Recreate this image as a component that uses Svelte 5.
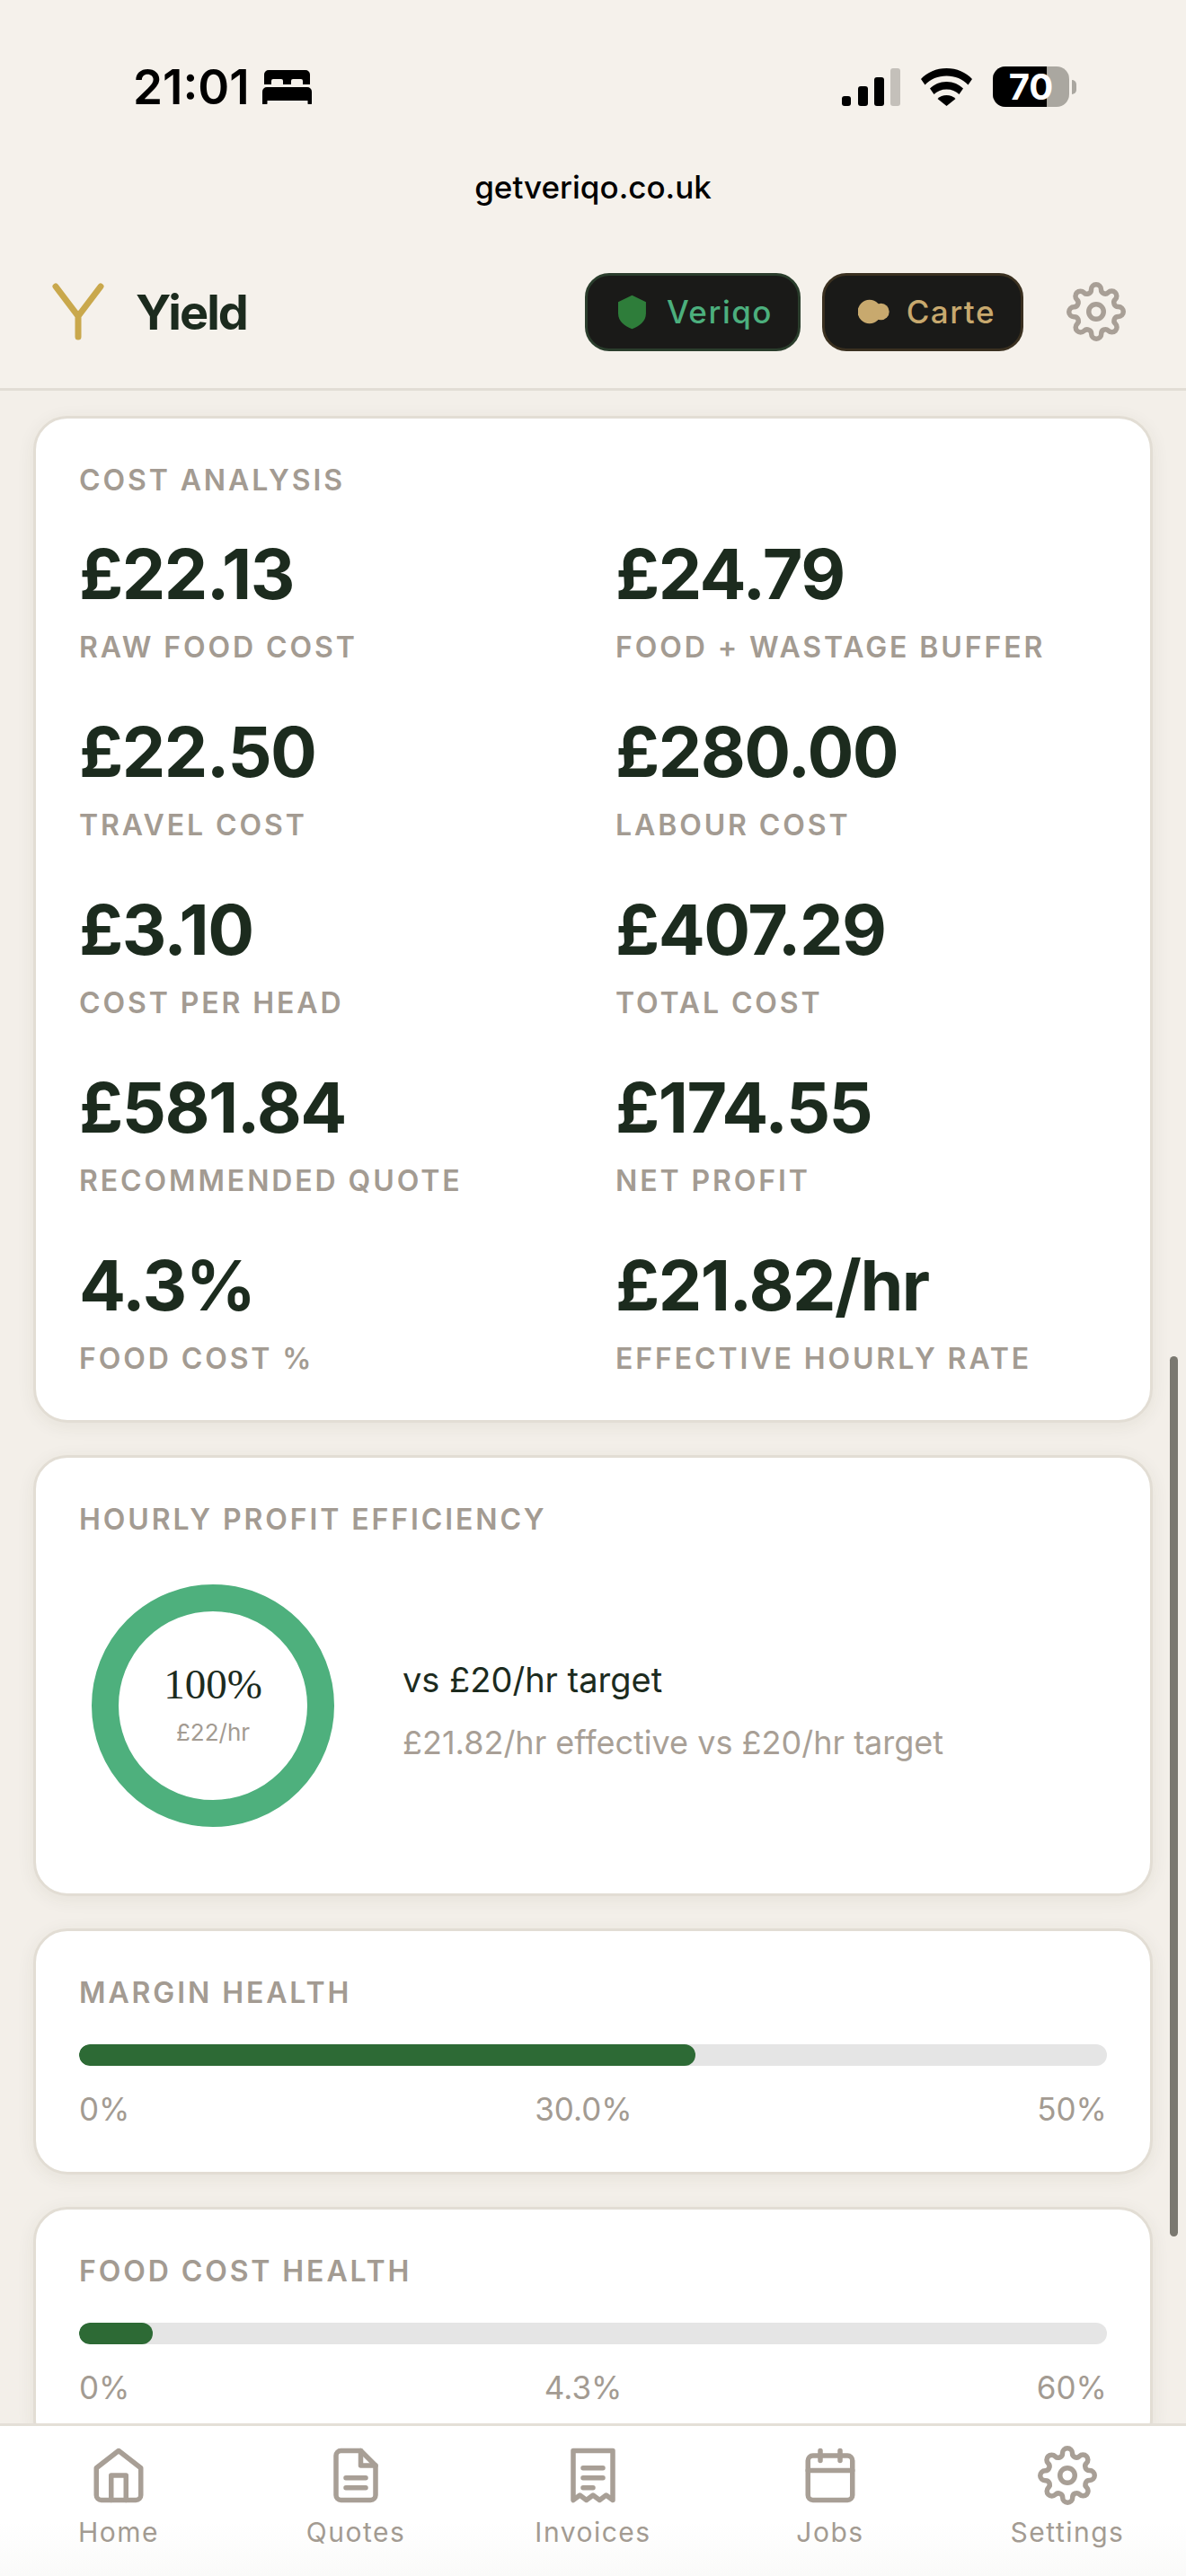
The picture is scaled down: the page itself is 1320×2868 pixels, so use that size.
<script>
  const metrics = [
    ['£22.13', 'RAW FOOD COST'],
    ['£24.79', 'FOOD + WASTAGE BUFFER'],
    ['£22.50', 'TRAVEL COST'],
    ['£280.00', 'LABOUR COST'],
    ['£3.10', 'COST PER HEAD'],
    ['£407.29', 'TOTAL COST'],
    ['£581.84', 'RECOMMENDED QUOTE'],
    ['£174.55', 'NET PROFIT'],
    ['4.3%', 'FOOD COST %'],
    ['£21.82/hr', 'EFFECTIVE HOURLY RATE']
  ];

  const bars = [
    { title: 'MARGIN HEALTH', fill: 60, low: '0%', mid: '30.0%', high: '50%' },
    { title: 'FOOD COST HEALTH', fill: 7.17, low: '0%', mid: '4.3%', high: '60%' }
  ];

  const gearPath =
    'M19.4 15a1.65 1.65 0 0 0 .33 1.82l.06.06a2 2 0 0 1 0 2.83 2 2 0 0 1-2.83 0l-.06-.06a1.65 1.65 0 0 0-1.82-.33 1.65 1.65 0 0 0-1 1.51V21a2 2 0 0 1-2 2 2 2 0 0 1-2-2v-.09A1.65 1.65 0 0 0 9 19.4a1.65 1.65 0 0 0-1.82.33l-.06.06a2 2 0 0 1-2.83 0 2 2 0 0 1 0-2.83l.06-.06a1.65 1.65 0 0 0 .33-1.82 1.65 1.65 0 0 0-1.51-1H3a2 2 0 0 1-2-2 2 2 0 0 1 2-2h.09A1.65 1.65 0 0 0 4.6 9a1.65 1.65 0 0 0-.33-1.82l-.06-.06a2 2 0 0 1 0-2.83 2 2 0 0 1 2.83 0l.06.06a1.65 1.65 0 0 0 1.82.33H9a1.65 1.65 0 0 0 1-1.51V3a2 2 0 0 1 2-2 2 2 0 0 1 2 2v.09a1.65 1.65 0 0 0 1 1.51 1.65 1.65 0 0 0 1.82-.33l.06-.06a2 2 0 0 1 2.83 0 2 2 0 0 1 0 2.83l-.06.06a1.65 1.65 0 0 0-.33 1.82V9a1.65 1.65 0 0 0 1.51 1H21a2 2 0 0 1 2 2 2 2 0 0 1-2 2h-.09a1.65 1.65 0 0 0-1.51 1z';
</script>

<div class="page">
  <div class="status">
    <div class="time">
      <span>21:01</span>
      <svg width="55" height="38" viewBox="0 0 55 38" fill="#000">
        <path d="M7 0h41a5 5 0 0 1 5 5v11h-8v-4a2 2 0 0 0-2-2h-9a2 2 0 0 0-2 2v4h-9v-4a2 2 0 0 0-2-2h-9a2 2 0 0 0-2 2v4H2V5a5 5 0 0 1 5-5z" />
        <path d="M5 19h45a5 5 0 0 1 5 5v13a1.500 1.500 0 0 1-1.500 1.500h-1.500a1.500 1.500 0 0 1-1.500-1.500v-3h-45v3a1.500 1.500 0 0 1-1.500 1.500h-1.500A1.500 1.500 0 0 1 0 37V24a5 5 0 0 1 5-5z" />
      </svg>
    </div>
    <div class="indicators">
      <svg width="65" height="42" viewBox="0 0 65 42">
        <rect x="0" y="31" width="10" height="11" rx="3" fill="#000" />
        <rect x="18" y="20" width="11" height="22" rx="3" fill="#000" />
        <rect x="36" y="10" width="11" height="32" rx="3" fill="#000" />
        <rect x="54" y="0" width="11" height="42" rx="3" fill="#c4c0ba" />
      </svg>
      <svg width="57" height="42" viewBox="0 0 57 42" fill="#000">
        <path d="M28.500 0C17 0 7 4.500 0 12l4.500 6.500C10.500 12 19 8.500 28.500 8.500S46.500 12 52.500 18.500L57 12C50 4.500 40 0 28.500 0z" />
        <path d="M28.500 15c-7.500 0-14 3-18.500 7.500l4.500 6.500c3.500-3.500 8.500-5.500 14-5.500s10.500 2 14 5.500l4.500-6.500C42.500 18 36 15 28.500 15z" />
        <path d="M28.500 30c-4 0-7.500 1.500-10 4l10 8 10-8c-2.500-2.500-6-4-10-4z" />
      </svg>
      <div class="battery">
        <div class="cell">
          <div class="charge"></div>
          <span>70</span>
        </div>
        <div class="nub"></div>
      </div>
    </div>
  </div>

  <div class="url">getveriqo.co.uk</div>

  <header>
    <div class="brand">
      <svg width="58" height="64" viewBox="0 0 58 64" fill="none" stroke="#c9a84c" stroke-width="7" stroke-linecap="round">
        <path d="M4 4l25 33 25-33M29 37v23" />
      </svg>
      <span>Yield</span>
    </div>
    <div class="actions">
      <div class="pill veriqo">
        <svg width="34" height="41" viewBox="0 0 34 41">
          <path d="M17 0L34 8V22C34 32 26 38 17 41C8 38 0 32 0 22V8z" fill="#2e7d3a" />
        </svg>
        <span>Veriqo</span>
      </div>
      <div class="pill carte">
        <svg width="38" height="30" viewBox="0 0 38 30" fill="#c8a96e">
          <circle cx="14" cy="15" r="14.500" />
          <circle cx="28" cy="15" r="10" />
        </svg>
        <span>Carte</span>
      </div>
      <svg class="top-gear" width="66" height="66" viewBox="0 0 24 24" fill="none" stroke="#a89f96" stroke-width="2" stroke-linecap="round" stroke-linejoin="round">
        <circle cx="12" cy="12" r="3" />
        <path d={gearPath} />
      </svg>
    </div>
  </header>

  <main>
    <section class="card metrics-card">
      <h2>COST ANALYSIS</h2>
      <div class="metrics">
        {#each metrics as [value, label]}
          <div class="metric">
            <div class="value">{value}</div>
            <div class="label">{label}</div>
          </div>
        {/each}
      </div>
    </section>

    <section class="card efficiency-card">
      <h2>HOURLY PROFIT EFFICIENCY</h2>
      <div class="efficiency">
        <svg class="donut" width="270" height="270" viewBox="0 0 270 270">
          <circle cx="135" cy="135" r="120" fill="none" stroke="#4eb07d" stroke-width="30" />
          <text x="135" y="127" text-anchor="middle" class="donut-pct">100%</text>
          <text x="135" y="174" text-anchor="middle" class="donut-sub">£22/hr</text>
        </svg>
        <div class="efficiency-text">
          <div class="target">vs £20/hr target</div>
          <div class="detail">£21.82/hr effective vs £20/hr target</div>
        </div>
      </div>
    </section>

    {#each bars as bar}
      <section class="card bar-card">
        <h2>{bar.title}</h2>
        <div class="track">
          <div class="fill" style="width: {bar.fill}%"></div>
        </div>
        <div class="scale">
          <span>{bar.low}</span>
          <span>{bar.mid}</span>
          <span>{bar.high}</span>
        </div>
      </section>
    {/each}
  </main>

  <div class="scrollbar"></div>

  <nav>
    <div class="tab">
      <svg viewBox="0 0 24 24">
        <path d="M3 9l9-7 9 7v11a2 2 0 0 1-2 2H5a2 2 0 0 1-2-2z" />
        <path d="M9 22V12h6v10" />
      </svg>
      <span>Home</span>
    </div>
    <div class="tab">
      <svg viewBox="0 0 24 24">
        <path d="M14 2H6a2 2 0 0 0-2 2v16a2 2 0 0 0 2 2h12a2 2 0 0 0 2-2V8z" />
        <path d="M14 2v6h6M16 13H8M16 17H8" />
      </svg>
      <span>Quotes</span>
    </div>
    <div class="tab">
      <svg viewBox="0 0 24 24">
        <path d="M4 2h16v20l-2.670-2-2.660 2-2.670-2-2.670 2-2.660-2L4 22z" />
        <path d="M8 9h8M8 13h8M8 17h4" />
      </svg>
      <span>Invoices</span>
    </div>
    <div class="tab">
      <svg viewBox="0 0 24 24">
        <rect x="3" y="4" width="18" height="18" rx="2" />
        <path d="M16 2v4M8 2v4M3 10h18" />
      </svg>
      <span>Jobs</span>
    </div>
    <div class="tab">
      <svg viewBox="0 0 24 24">
        <circle cx="12" cy="12" r="3" />
        <path d={gearPath} />
      </svg>
      <span>Settings</span>
    </div>
  </nav>
</div>

<style>
  :global(body) {
    margin: 0;
    background: #f5f1eb;
  }

  .page {
    position: relative;
    width: 1320px;
    height: 2868px;
    display: flex;
    flex-direction: column;
    overflow: hidden;
    background: #f5f1eb;
    font-family: Inter, "Liberation Sans", sans-serif;
  }

  .status {
    height: 120px;
    flex: none;
    box-sizing: border-box;
    padding: 74px 122px 0 148px;
    display: flex;
    justify-content: space-between;
    align-items: flex-start;
  }

  .time {
    display: flex;
    align-items: center;
    gap: 14px;
    font-size: 53px;
    font-weight: 600;
    line-height: 46px;
    color: #000;
  }

  .indicators {
    display: flex;
    align-items: center;
    gap: 23px;
  }

  .battery {
    display: flex;
    align-items: center;
    gap: 3px;
  }

  .cell {
    position: relative;
    width: 85px;
    height: 45px;
    border-radius: 14px;
    background: #aaa7a0;
    display: flex;
    align-items: center;
    justify-content: center;
    font-size: 40px;
    font-weight: 700;
    line-height: 45px;
    color: #fff;
  }

  .charge {
    position: absolute;
    left: 0;
    top: 0;
    bottom: 0;
    width: 60px;
    border-radius: 14px 0 0 14px;
    background: #000;
  }

  .cell span {
    position: relative;
  }

  .nub {
    width: 5px;
    height: 16px;
    border-radius: 0 5px 5px 0;
    background: #aaa7a0;
  }

  .url {
    flex: none;
    height: 44px;
    margin-top: 66px;
    text-align: center;
    font-size: 35px;
    font-weight: 500;
    line-height: 44px;
    color: #000;
  }

  header {
    flex: none;
    height: 205px;
    box-sizing: border-box;
    padding: 32px 67px 0 58px;
    display: flex;
    justify-content: space-between;
    align-items: center;
    border-bottom: 3px solid #e2ddd5;
  }

  .brand {
    display: flex;
    align-items: center;
    gap: 35px;
    font-size: 54px;
    font-weight: 700;
    letter-spacing: -2px;
    color: #1c2b1e;
  }

  .actions {
    display: flex;
    align-items: center;
    gap: 24px;
  }

  .pill {
    box-sizing: border-box;
    height: 87px;
    padding: 0 28px 0 34px;
    display: flex;
    align-items: center;
    gap: 23px;
    border-radius: 27px;
    background: #1a1a18;
    font-size: 35px;
    font-weight: 500;
    letter-spacing: 1.500px;
  }

  .veriqo {
    width: 240px;
    border: 3px solid #2a3d2c;
    color: #4caf7d;
  }

  .carte {
    width: 224px;
    padding-left: 37px;
    gap: 19px;
    border: 3px solid #3a3020;
    color: #c8a96e;
  }

  .top-gear {
    margin-left: 24px;
  }

  main {
    flex: 1;
    min-height: 0;
    overflow: hidden;
    padding: 28px 37px 0;
    background: #f3efe9;
    display: flex;
    flex-direction: column;
    gap: 36px;
  }

  .card {
    flex: none;
    background: #fff;
    border: 3px solid #e2ddd4;
    border-radius: 38px;
    padding: 48px 48px 46px;
    box-shadow: 0 4px 20px rgba(60, 50, 30, 0.07);
  }

  h2 {
    margin: 0;
    font-size: 32px;
    font-weight: 600;
    line-height: 42px;
    letter-spacing: 2.900px;
    color: #a39b92;
  }

  .metrics {
    margin-top: 43px;
    display: grid;
    grid-template-columns: 597px 1fr;
    row-gap: 54px;
  }

  .value {
    font-size: 77px;
    font-weight: 750;
    line-height: 80px;
    letter-spacing: -1.500px;
    color: #1c2b1e;
  }

  .label {
    margin-top: 20px;
    font-size: 32px;
    font-weight: 600;
    line-height: 44px;
    letter-spacing: 2.900px;
    color: #a39b92;
  }

  .efficiency-card {
    padding-bottom: 74px;
  }

  .efficiency {
    margin-top: 51px;
    padding-left: 14px;
    display: flex;
    align-items: center;
    gap: 76px;
  }

  .donut {
    flex: none;
  }

  .donut-pct {
    font-family: "Liberation Serif", serif;
    font-size: 47px;
    fill: #1c2b1e;
  }

  .donut-sub {
    font-size: 26px;
    fill: #a39b92;
  }

  .efficiency-text {
    margin-top: 12px;
  }

  .target {
    font-size: 38px;
    line-height: 46px;
    color: #1c2b1e;
  }

  .detail {
    margin-top: 24px;
    font-size: 36px;
    line-height: 46px;
    color: #a89f96;
  }

  .bar-card {
    padding-bottom: 49px;
  }

  .track {
    margin-top: 36px;
    height: 24px;
    border-radius: 12px;
    overflow: hidden;
    background: #e5e5e5;
  }

  .fill {
    height: 100%;
    border-radius: 12px;
    background: #2d6a35;
  }

  .scale {
    margin-top: 27px;
    display: flex;
    justify-content: space-between;
    font-size: 35px;
    line-height: 42px;
    color: #a39b92;
  }

  .scrollbar {
    position: absolute;
    left: 1302px;
    top: 1510px;
    width: 9px;
    height: 980px;
    border-radius: 5px;
    background: #7a7870;
  }

  nav {
    flex: none;
    height: 170px;
    box-sizing: border-box;
    padding-top: 22px;
    display: grid;
    grid-template-columns: repeat(5, 1fr);
    background: linear-gradient(#fff 65%, #fafaf9);
    border-top: 3px solid #e4dfd7;
  }

  .tab {
    display: flex;
    flex-direction: column;
    align-items: center;
    gap: 10px;
    font-size: 30px;
    line-height: 40px;
    letter-spacing: 1.500px;
    color: #a39b92;
  }

  .tab svg {
    width: 66px;
    height: 66px;
    fill: none;
    stroke: #a89f96;
    stroke-width: 2;
    stroke-linecap: round;
    stroke-linejoin: round;
  }
</style>
